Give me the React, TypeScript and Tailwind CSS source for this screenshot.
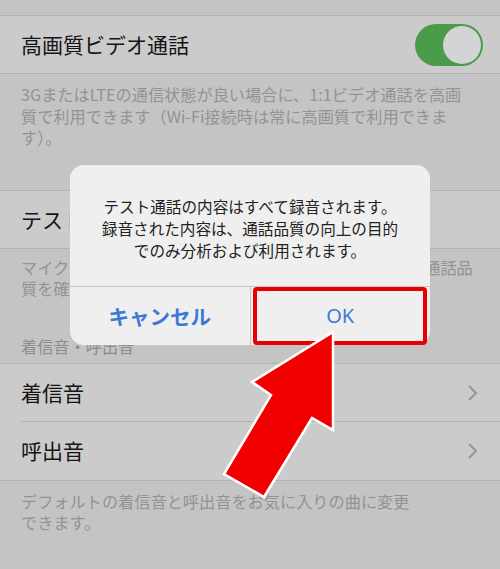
import React from "react";

const Chevron = () => (
  <svg width="11" height="18" viewBox="0 0 11 18" fill="none">
    <path d="M2.5 2.5l6.5 6.5-6.5 6.5" stroke="#969696" strokeWidth="2.1" strokeLinecap="round" strokeLinejoin="round" />
  </svg>
);

export default function App() {
  return (
    <div className="relative w-[500px] h-[569px] overflow-hidden bg-[#c4c4c4] font-['Noto_Sans_CJK_JP',sans-serif]">
      <div className="h-[15px]" />
      {/* group 1 */}
      <div className="border-y border-[#b2b2b2] bg-[#cbcbcb]">
        <div className="h-[57px] flex items-center justify-between pl-[21px] pr-[17px]">
          <span className="text-[21px] text-[#141414]">高画質ビデオ通話</span>
          <div className="w-[68px] h-[42px] rounded-full bg-[#4a9c4a] flex items-center justify-end pr-[2px]">
            <div className="w-[38px] h-[38px] rounded-full bg-[#d4d4d4]" />
          </div>
        </div>
      </div>
      <div className="h-[116px] pt-[10px] pl-[21px] text-[16.2px] leading-[21.5px] text-[#939393] whitespace-nowrap">
        <div>3GまたはLTEの通信状態が良い場合に、1:1ビデオ通話を高画</div>
        <div>質で利用できます（Wi-Fi接続時は常に高画質で利用できま</div>
        <div>す）。</div>
      </div>
      {/* group 2 */}
      <div className="border-y border-[#b2b2b2] bg-[#cbcbcb]">
        <div className="h-[57px] flex items-center pl-[21px]">
          <span className="text-[21px] text-[#141414]">テスト通話</span>
        </div>
      </div>
      <div className="h-[114px] flex flex-col justify-between pt-[8px] pb-[6px] pl-[21px] text-[16.2px] leading-[21px] text-[#939393] whitespace-nowrap">
        <div>
          <div>マイクとスピーカーを使ったテスト通話を行うことで、通話品</div>
          <div>質を確認できます。</div>
        </div>
        <div className="text-[#8c8c8c]">着信音・呼出音</div>
      </div>
      {/* group 3 */}
      <div className="border-y border-[#b2b2b2] bg-[#cbcbcb]">
        <div className="h-[57px] flex items-center justify-between pl-[21px] pr-[22px]">
          <span className="text-[21px] text-[#141414]">着信音</span>
          <Chevron />
        </div>
        <div className="h-px ml-[21px] bg-[#b2b2b2]" />
        <div className="h-[58px] flex items-center justify-between pl-[21px] pr-[22px]">
          <span className="text-[21px] text-[#141414]">呼出音</span>
          <Chevron />
        </div>
      </div>
      <div className="pt-[10px] pl-[21px] text-[16.2px] leading-[21px] text-[#939393] whitespace-nowrap">
        <div>デフォルトの着信音と呼出音をお気に入りの曲に変更</div>
        <div>できます。</div>
      </div>

      {/* dialog */}
      <div className="absolute left-[70px] top-[165px] w-[360px] h-[180px] rounded-[14px] bg-[#efefef] flex flex-col">
        <div className="h-[121px] pt-[30px] text-center text-[15.6px] leading-[22px] text-[#222222]">
          <div>テスト通話の内容はすべて録音されます。</div>
          <div>録音された内容は、通話品質の向上の目的</div>
          <div>でのみ分析および利用されます。</div>
        </div>
        <div className="flex-1 flex border-t border-[#c6c6c6]">
          <div className="flex-1 flex items-center justify-center text-[20.5px] font-bold text-[#3a7ad6]">キャンセル</div>
          <div className="w-px bg-[#c6c6c6]" />
          <div className="flex-1 flex items-center justify-center text-[20px] text-[#3a7ad6] font-['Noto_Sans',sans-serif]">OK</div>
        </div>
      </div>

      {/* red highlight box */}
      <div className="absolute left-[253px] top-[287px] w-[174px] h-[58px] border-[4px] border-[#e60000] rounded-[4px]" />

      {/* arrow */}
      <svg className="absolute left-0 top-0" width="500" height="569" viewBox="0 0 500 569">
        <polygon
          points="333,332 333,430 312,418 264,497 224,474 271,395 252,382"
          fill="#f20000"
          stroke="#ffffff"
          strokeWidth="2.5"
          strokeLinejoin="miter"
        />
      </svg>
    </div>
  );
}
